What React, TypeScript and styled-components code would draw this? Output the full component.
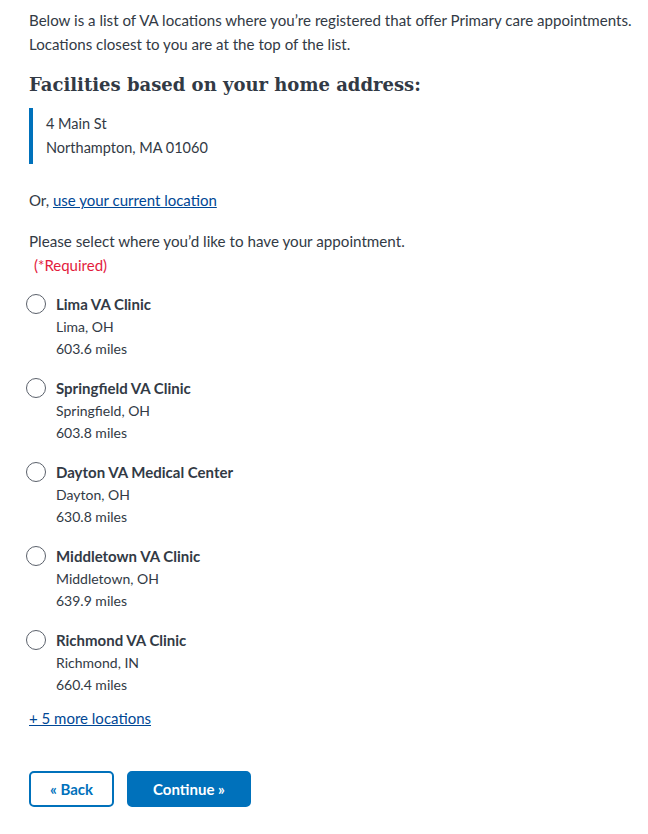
import React from "react";
import styled, { createGlobalStyle } from "styled-components";

const GlobalStyle = createGlobalStyle`
  body {
    margin: 0;
    background: #fff;
    color: #323a45;
    font-family: "Lato", "Liberation Sans", sans-serif;
  }
`;

const facilities = [
  { name: "Lima VA Clinic", city: "Lima, OH", miles: "603.6 miles" },
  { name: "Springfield VA Clinic", city: "Springfield, OH", miles: "603.8 miles" },
  { name: "Dayton VA Medical Center", city: "Dayton, OH", miles: "630.8 miles" },
  { name: "Middletown VA Clinic", city: "Middletown, OH", miles: "639.9 miles" },
  { name: "Richmond VA Clinic", city: "Richmond, IN", miles: "660.4 miles" },
];

function App() {
  return (
    <Page>
      <GlobalStyle />
      <Intro>
        Below is a list of VA locations where you’re registered that offer Primary care
        appointments. Locations closest to you are at the top of the list.
      </Intro>
      <Heading>Facilities based on your home address:</Heading>
      <Address>
        <span>4 Main St</span>
        <span>Northampton, MA 01060</span>
      </Address>
      <Para>
        Or, <Link href="#">use your current location</Link>
      </Para>
      <Fieldset>
        <Legend>
          Please select where you’d like to have your appointment.
          <Required>(*Required)</Required>
        </Legend>
        <Options>
          {facilities.map((f) => (
            <Option key={f.name}>
              <Radio type="radio" name="facility" />
              <Details>
                <Name>{f.name}</Name>
                <span>{f.city}</span>
                <span>{f.miles}</span>
              </Details>
            </Option>
          ))}
        </Options>
      </Fieldset>
      <MoreLink href="#">+ 5 more locations</MoreLink>
      <Buttons>
        <Button $outline>« Back</Button>
        <Button>Continue »</Button>
      </Buttons>
    </Page>
  );
}

export default App;

const Page = styled.div`
  width: 648px;
  padding: 8px 8px 0 29px;
  font-size: 15px;
  line-height: 24px;
  height: 826px;
  box-sizing: border-box;
`;

const Intro = styled.p`
  margin: 0;
  font-size: 15.1px;
`;

const Heading = styled.h2`
  margin: 13px 0 0;
  font-family: "DejaVu Serif", "Liberation Serif", serif;
  font-weight: 700;
  font-size: 18px;
  line-height: 32px;
`;

const Address = styled.div`
  margin-top: 7px;
  border-left: 4px solid #0071bb;
  padding: 4px 0 4px 13px;
  display: flex;
  flex-direction: column;
  font-size: 14.5px;
`;

const Para = styled.p`
  margin: 24px 0 0;
  font-size: 15px;
`;

const Link = styled.a`
  color: #004795;
`;

const Fieldset = styled.fieldset`
  border: 0;
  margin: 17px 0 0;
  padding: 0;
`;

const Legend = styled.legend`
  padding: 0;
  font-size: 15.2px;
  display: flex;
  flex-direction: column;
`;

const Required = styled.span`
  color: #e31c3d;
  padding-left: 5px;
  font-size: 15px;
`;

const Options = styled.div`
  margin-top: 15px;
  display: flex;
  flex-direction: column;
  gap: 16px;
`;

const Option = styled.label`
  display: flex;
  align-items: flex-start;
  gap: 10px;
`;

const Radio = styled.input`
  appearance: none;
  width: 20px;
  height: 20px;
  margin: 2px 0 0 -3px;
  border-radius: 50%;
  border: 1px solid #5b616b;
  box-shadow: 0 0 0 1px #fff inset;
  background: #fff;
`;

const Details = styled.div`
  display: flex;
  flex-direction: column;
  font-size: 14px;
  line-height: 22px;
`;

const Name = styled.span`
  font-weight: 700;
  font-size: 15px;
  line-height: 24px;
`;

const MoreLink = styled.a`
  display: inline-block;
  margin-top: 10px;
  color: #004795;
  font-size: 15px;
`;

const Buttons = styled.div`
  display: flex;
  gap: 13px;
  margin-top: 41px;
`;

const Button = styled.button<{ $outline?: boolean }>`
  height: 36px;
  padding: 0 ${(p) => (p.$outline ? "19px" : "24px")};
  border-radius: 5px;
  font-family: "Lato", "Liberation Sans", sans-serif;
  font-weight: 700;
  font-size: 15px;
  background: ${(p) => (p.$outline ? "#fff" : "#0071bb")};
  color: ${(p) => (p.$outline ? "#0071bb" : "#fff")};
  border: 2px solid #0071bb;
`;
